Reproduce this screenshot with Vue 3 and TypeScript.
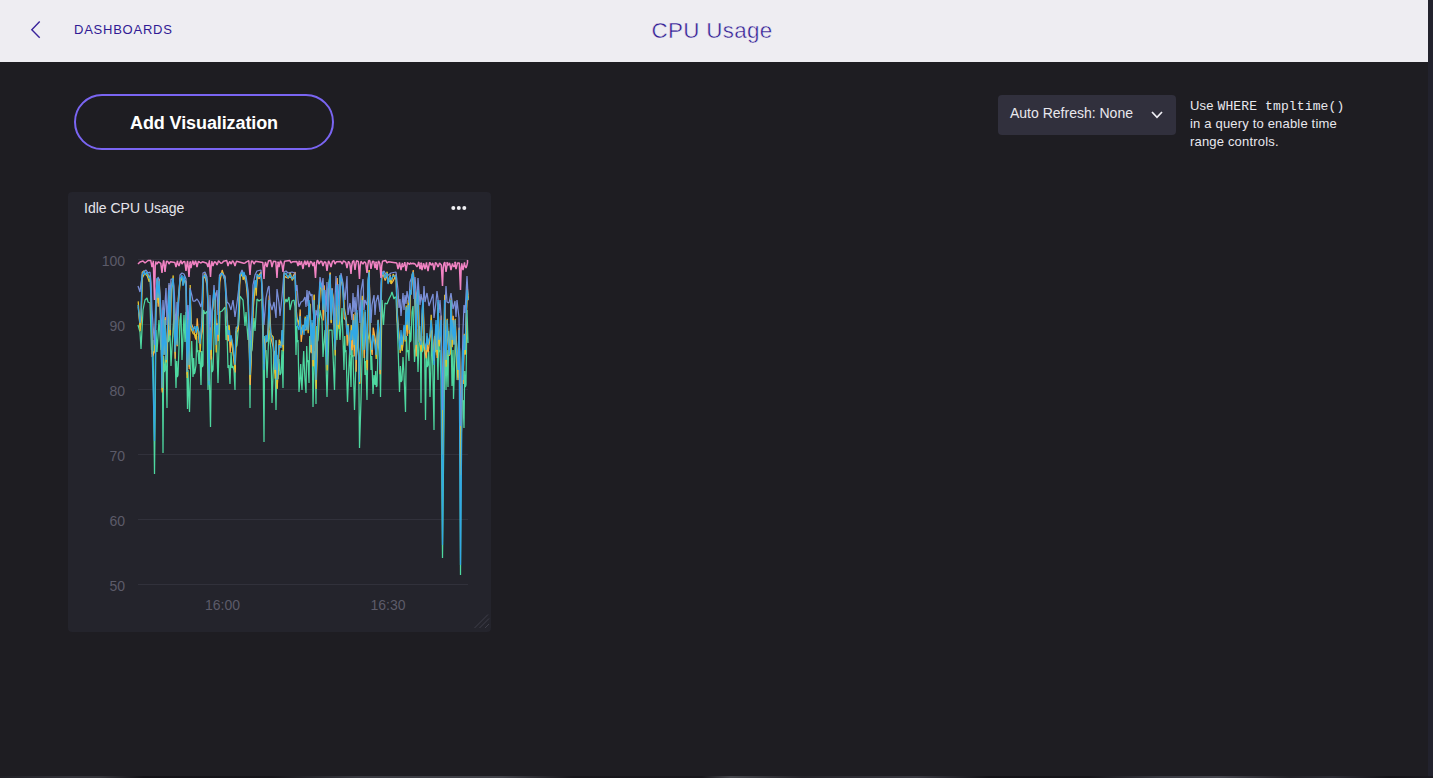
<script setup lang="ts">
interface Series {
  name: string
  color: string
  points: string
}

const ticks: number[] = [100, 90, 80, 70, 60, 50]
const tickY = (value: number): number => 259.5 + (100 - value) * 6.5

const violet = `138,286 140,292 141,283 143,273 146,270 148,273 150,272 151,282 152,310 154.5,345 156,290 158,277 159,279 160,296 161,310 162,345 163,300 164,320 166,288 167,325 168,300 169,283 170,296 171,279 173,279 174,286 176,330 177,302 178,316 180,275 182,273 184,274 186,279 187,320 188,305 189,335 190,288 192,296 193,301 195,301 197,299 199,302 201,307 202,300 203,273 205,272 207,277 209,340 210,295 211,330 213,302 214,285 215,300 217,290 218,315 219.5,275 221,273 225,276 226,290 227,302 229,304 231,310 233,300 235,317 237,303 239,286 240,275 242,270 244,275 246,276 248,290 249,325 250,340 252,315 253,285 255,275 257,271 261,270 263,300 264,325 266,298 268,288 269,286 270,303 272,310 274,302 276,318 277,289 279,303 280,316 282,297 284,272 286,271 288,273 292,272 295,273 296,291 297,285 298,300 299,307 301,302 303,301 305,297 306,307 307,290 308,306 309,291 311,296 312,294 313,310 315,326 316,310 318,318 320,277 322,288 323,278 324,300 325,290 326,312 327,282 328,325 330,274 331,312 332,288 334,324 336,276 337,300 338,284 339,306 341,273 343,283 345,300 347,276 348,315 349,309 350,303 352,320 353,293 354,312 355,297 356,315 358,285 360,323 361,291 363,279 364,310 365,300 367,305 369,277 371,323 372,305 374,295 375,315 376,302 378,295 380,312 381,284 382,273 384,271 387,276 391,273 396,272 398,290 399,308 400,299 401,316 403,293 404,310 405,295 406,304 407,291 409,303 410,282 413,274 414,299 415,277 417,304 418,278 420,305 421,294 423,306 424,286 425,302 427,293 429,306 431,300 433,294 434,318 436,302 437,291 438,299 439,313 440,300 441,315 442.5,410 444,330 446,286 447,302 449,303 451,293 453,309 455,301 456,317 457,300 459,318 460.5,426 462,375 463,330 464,305 465,313 467,276 468,295`

const blue = `138,305 140,323 141,315 142,275 144,271 145,275 147,272 149,278 150,277 151,300 152,345 154.5,441 156,300 157,278 158,298 159,281 160,300 161,340 162,388 163,310 164,355 165,320 166,360 168,320 169,290 170,330 171,290 173,278 174,320 175,352 176,320 177,345 178,305 180,280 182,275 183,286 184,276 186,288 187,372 188,320 189,365 190,290 191,325 193,331 195,326 196,333 197,326 199,332 200,344 202,320 203,277 205,275 207,282 208,310 209,385 210,330 211,350 212,310 214,290 215,300 216,345 217,325 218,335 219.5,277 222,273 225,280 226,300 228,335 229,330 230,342 231,335 233,345 235,365 236,330 238,325 239,290 240,275 242,272 243,277 244,272 246,280 248,295 250,375 252,330 253,300 255,280 256,288 257,274 259,277 261,274 262,290 264,370 265,345 266,335 267,342 268,330 269,300 270,325 271,335 273,340 275,370 276,340 277,380 279,345 281,348 282,330 283,345 284,275 286,273 288,278 290,274 292,279 295,275 296,310 297,325 299,330 300,316 301,335 303,325 304,335 305,318 306,330 307,315 308,330 309,300 310,310 311,345 312,320 313,360 314,300 315,350 316,380 318,310 319,300 320,282 322,290 323,310 324,290 325,310 326,340 327,365 328,290 330,275 331,320 332,290 333,300 335,350 336,310 337,285 338,325 339,320 340,275 342,282 343,295 344,310 346,320 347,335 348,325 350,355 351,330 352,340 353,320 354,345 355,315 356,360 357,310 359.5,382 361,330 362,300 363,320 364,350 365,310 367,360 368,280 369,272 370,330 372,350 373,335 375,345 376,355 377,340 378,320 379,335 380,370 381.5,275 383,272 385,278 387,273 388,284 390,276 391,280 393,276 396,276 397,310 399,340 400,350 401,330 402,345 404,325 405,340 406,307 407,325 408,305 409,330 410,290 411,295 412,275 413,272 415,300 416,345 417,300 418,290 419,340 421,345 422,310 423,300 424,340 426,350 427,333 428,345 430,335 431,320 432,330 434,365 435,340 436,320 437,350 438,300 439,340 440,335 441,320 442.5,545 444.5,300 445,340 446,360 447,320 449,355 450,345 451,300 452,340 453,320 454,345 455,320 456,345 458,370 459,330 460.5,565 462.5,350 463,380 464,335 465,350 467,290 468,300`

const green = `138,325 140,332 141,349 143,310 145,300 147,298 148,302 150,303 151.5,350 153,340 154.5,474 156,330 157,352 159,320 161,350 163,453 165,370 167,408 169,340 171,366 173,330 174,315 176,388 178,375 180,320 181,313 182,360 184,315 185,342 186,312 187.5,409 188,370 189.5,412 191,355 193,377 195,372 196,365 198,350 199,364 201,385 203,365 203.5,310 205,314 207,311 208,390 209,360 210.5,427 213,370 215,310 217,350 218,383 220,312 222,311 225,307 226,340 228,368 229,365 230,384 233,366 234,371 235,390 237,345 239,320 240,296 243,300 245,326 246,312 248,340 250,408 252,350 254,318 255,331 257,299 259,301 262,299 263,350 264,442 266,350 267,378 269,330 271,350 272,403 273.5,365 276,410 277,355 278,379 281,373 282,350 283,388 284,305 286,299 287,302 289,297 290,310 292,301 294,300 295,307 296,355 298,340 299,392 300,378 302,390 303,365 305,380 306,393 308,360 309,383 311,350 313,407 314,365 316,404 318,340 320,310 322,320 323,357 325,330 327,397 329,330 332,330 334.5,390 336,320 337,340 338,315 340,340 342,308 343,340 344,370 346,350 347.5,402 349,365 351,387 353,355 354.5,410 356,360 357,350 359.5,448 361,400 363,320 364,340 365,375 367,400 368,340 370,330 371,370 373,394 374,375 375,385 377,386 378,350 380.5,397 382,300 383.5,325 385,303 387,304 389,299 391,295 392,292 394,299 395,297 396,297 398,345 399.5,392 402,380 403,357 404,374 405.5,412 408,350 409,361 411,340 412,312 413,306 414.5,362 416,343 418,372 419,340 421,403 423,350 425.5,420 428,365 430,397 432,330 434,430 436,350 438,380 440,350 441,380 442.5,558 445,330 446,390 447,350 448,387 450,345 452,386 453,350 453.5,399 455,350 457,380 458,350 460.5,575 463,400 464,428 466,385 467,310 468,343`

const pinkDips: Array<[number, number]> = [
  [152, 267], [154.5, 300], [157, 264], [162, 273], [165, 272], [169, 264], [176, 267], [179, 266],
  [182, 264], [186, 271], [189, 277], [191, 268], [194, 265], [197, 267], [201, 263], [208, 267],
  [210.5, 277], [213, 266], [217, 265], [222, 263], [228, 266], [231, 264], [235, 266], [245, 263],
  [250, 275], [254, 264], [264, 279], [267, 267], [272, 267], [277, 278], [279, 267], [283, 272],
  [291, 263], [298, 266], [300, 265], [303, 269], [306, 265], [309, 267], [313, 266], [315.5, 278],
  [319, 264], [323, 266], [327, 271], [331, 267], [335, 264], [342, 264], [347, 268], [351, 274],
  [355, 270], [359.5, 279], [363, 264], [367, 273], [371, 269], [375, 268], [377, 270], [381, 278],
  [387, 263], [398, 269], [401, 270], [403, 267], [406, 271], [409, 264], [413, 263], [417, 267],
  [420, 269], [422, 270], [425, 269], [428, 271], [431, 265], [434, 270], [438, 267], [442.5, 286],
  [446, 272], [448, 265], [451, 270], [454, 267], [456, 269], [460.5, 290], [463, 270], [466, 268],
]

// Each dip falls from its own shoulder height and recovers in two steps.
const pink = '138,264 140,262 143,261 145,263 148,260.5 ' + pinkDips
  .map(([x, y], i) => {
    const busy = x > 396 ? 1.6 : 0
    const shoulder = 260.6 + (i * 5 % 4) * 0.9 + busy
    const recovery = 262 + busy + Math.min(4, (y - 262) * 0.4)
    return `${x - 1.2},${shoulder} ${x},${y} ${x + 0.7},${recovery} ${x + 1.5},${260.8 + (i % 3) * 0.5 + busy}`
  })
  .join(' ') + ' 467.5,260'

// Companion CPU cores track the blue core closely, with a small repeatable offset.
function companion(source: string, seed: number, range: number): string {
  let state = seed
  return source.split(' ').map((pair) => {
    const [x, y] = pair.split(',').map(Number)
    state = (state * 1103515245 + 12345) % 2147483648
    const offset = (state / 2147483648 - 0.4) * range
    const limited = y > 400 ? y - 90 : Math.max(270, y + (y < 285 ? offset * 0.45 : offset))
    return `${x + 0.2},${limited.toFixed(1)}`
  }).join(' ')
}

// Adds a brief recovery between widely spaced samples in the busy band.
function densify(source: string): string {
  const samples = source.split(' ').map((pair) => pair.split(',').map(Number))
  return samples.flatMap(([x, y], i) => {
    const next = samples[i + 1]
    const current = `${x},${y}`
    if (!next || next[0] - x < 1.8 || y < 335 || next[1] < 335) return [current]
    const peak = Math.min(y, next[1]) - 14
    return [current, `${x + (next[0] - x) * 0.35},${peak}`, `${x + (next[0] - x) * 0.65},${peak + 16}`]
  }).join(' ')
}

const series: Series[] = [
  { name: 'cpu0', color: '#4ed8a0', points: densify(green) },
  { name: 'cpu1', color: '#ffb142', points: companion(blue, 71, 20) },
  { name: 'cpu2', color: '#e5c52c', points: companion(blue, 913, 15) },
  { name: 'cpu3', color: '#7a8fd8', points: violet },
  { name: 'cpu4', color: '#32a8e6', points: blue },
  { name: 'cpu5', color: '#f283c3', points: pink },
]
</script>

<template>
  <div class="page">
    <div class="app">
      <header class="topbar">
        <a class="back">
          <svg class="back-icon" width="12" height="20" viewBox="0 0 12 20"><path d="M9.7 1.6 L1.8 9.7 L9.7 17.8" /></svg>
          <span class="crumb">DASHBOARDS</span>
        </a>
        <h1>CPU Usage</h1>
      </header>

      <div class="toolbar">
        <button class="add">Add Visualization</button>
        <div class="controls">
          <div class="select">
            <span>Auto Refresh: None</span>
            <svg width="14" height="10" viewBox="0 0 14 10"><path d="M2 2 L7 7.3 L12 2" /></svg>
          </div>
          <p class="hint">Use <code>WHERE tmpltime()</code><br>in a query to enable time<br>range controls.</p>
        </div>
      </div>

      <section class="card">
        <div class="card-head">
          <h2>Idle CPU Usage</h2>
          <svg width="16" height="6" viewBox="0 0 16 6">
            <circle cx="2.3" cy="3" r="2" /><circle cx="7.8" cy="3" r="2" /><circle cx="13.3" cy="3" r="2" />
          </svg>
        </div>
        <svg class="chart" width="423" height="400" viewBox="68 232 423 400">
          <g v-for="tick in ticks" :key="tick">
            <line class="grid" x1="138" x2="468" :y1="tickY(tick)" :y2="tickY(tick)" />
            <text class="label" x="125" :y="tickY(tick) + 6.5" text-anchor="end">{{ tick }}</text>
          </g>
          <polyline v-for="s in series" :key="s.name" class="line" :class="s.name" :points="s.points" :stroke="s.color" />
          <text class="label" x="222.5" y="610" text-anchor="middle">16:00</text>
          <text class="label" x="388" y="610" text-anchor="middle">16:30</text>
          <path class="grip" d="M474.5 628 L488 614.5 M479.5 628 L489 618.5 M485 628 L489 624" />
        </svg>
      </section>
    </div>
    <div class="edge"></div>
  </div>
</template>

<style>
body {
  background: #1e1d22;
  overflow: hidden;
}
</style>

<style scoped>
.page {
  width: 1433px;
  height: 778px;
  display: grid;
  grid-template: 776px 2px / 1428px 5px;
  background: #22222d;
  font-family: "Liberation Sans", Arial, sans-serif;
}
.app {
  background: #1e1d22;
}
.topbar {
  height: 62px;
  box-sizing: border-box;
  background: #eeedf2;
  display: grid;
  grid-template-columns: 1fr auto 1fr;
  color: #311a94;
}
.back {
  display: flex;
  align-items: flex-start;
  padding: 20px 0 0 30px;
}
.back-icon {
  fill: none;
  stroke: #3a239b;
  stroke-width: 1.4;
}
.crumb {
  margin: 2px 0 0 32px;
  font-size: 13px;
  line-height: 15px;
  letter-spacing: 0.76px;
}
h1 {
  margin: 0;
  padding: 18px 0 0 0;
  font-size: 22.4px;
  line-height: 26px;
  font-weight: 400;
  letter-spacing: 0.3px;
  position: relative;
  left: -2px;
  -webkit-text-stroke: 0.45px #eeedf2;
}
.toolbar {
  display: flex;
  justify-content: space-between;
  align-items: flex-start;
  padding: 32px 78px 0 74px;
  height: 98px;
}
.add {
  width: 260px;
  height: 56px;
  box-sizing: border-box;
  border: 2px solid #7a65f2;
  border-radius: 28px;
  padding: 2px 0 0;
  background: transparent;
  color: #fff;
  font: bold 18px "Liberation Sans", Arial, sans-serif;
  letter-spacing: -0.1px;
}
.controls {
  display: flex;
  gap: 14px;
  padding-top: 1px;
  color: #e9e8ee;
}
.select {
  width: 178px;
  height: 40px;
  box-sizing: border-box;
  border-radius: 4px;
  background: #31303d;
  display: flex;
  justify-content: space-between;
  padding: 10px 12px 0;
  font-size: 14px;
  line-height: 17px;
}
.select svg {
  margin-top: 5px;
  fill: none;
  stroke: #f0eff5;
  stroke-width: 1.7;
}
.hint {
  width: 160px;
  margin: 2px 0 0;
  font-size: 13px;
  letter-spacing: 0.18px;
  line-height: 18px;
  white-space: nowrap;
}
.hint code {
  font: 13px/1 "Liberation Mono", "Courier New", monospace;
  letter-spacing: 0.13px;
}
.card {
  margin-left: 68px;
  width: 423px;
  height: 440px;
  border-radius: 4px;
  background: #24242c;
}
.card-head {
  height: 40px;
  box-sizing: border-box;
  display: flex;
  justify-content: space-between;
  padding: 8px 24px 0 16px;
}
.card-head h2 {
  margin: 0;
  font-size: 14px;
  line-height: 17px;
  font-weight: 400;
  color: #e6e5eb;
}
.card-head svg {
  margin-top: 5px;
  fill: #f0f0f4;
}
.chart {
  display: block;
}
.grid {
  stroke: #31313b;
  stroke-width: 1;
}
.label {
  fill: #5c5b69;
  font-size: 14px;
}
.line {
  fill: none;
  stroke-width: 1.25;
  stroke-linejoin: bevel;
}
.cpu5 {
  stroke-width: 1.5;
}
.grip {
  fill: none;
  stroke: #3e3e49;
  stroke-width: 1;
}
.edge {
  grid-row: 2;
  grid-column: 1 / 3;
  background: linear-gradient(90deg, #202026, #34343b 5%, #35353b 7%, #131217 10%, #16151a 19%, #393a41 25%, #42434a 35%, #17161b 40%, #18171c 49%, #45464c 51%, #242329 56%, #393941 64%, #131217 69%, #16151a 76%, #383941 81%, #45464e 85%, #222127 90%, #2c2c34 93%, #131217 97%, #1b1a20);
}
</style>
